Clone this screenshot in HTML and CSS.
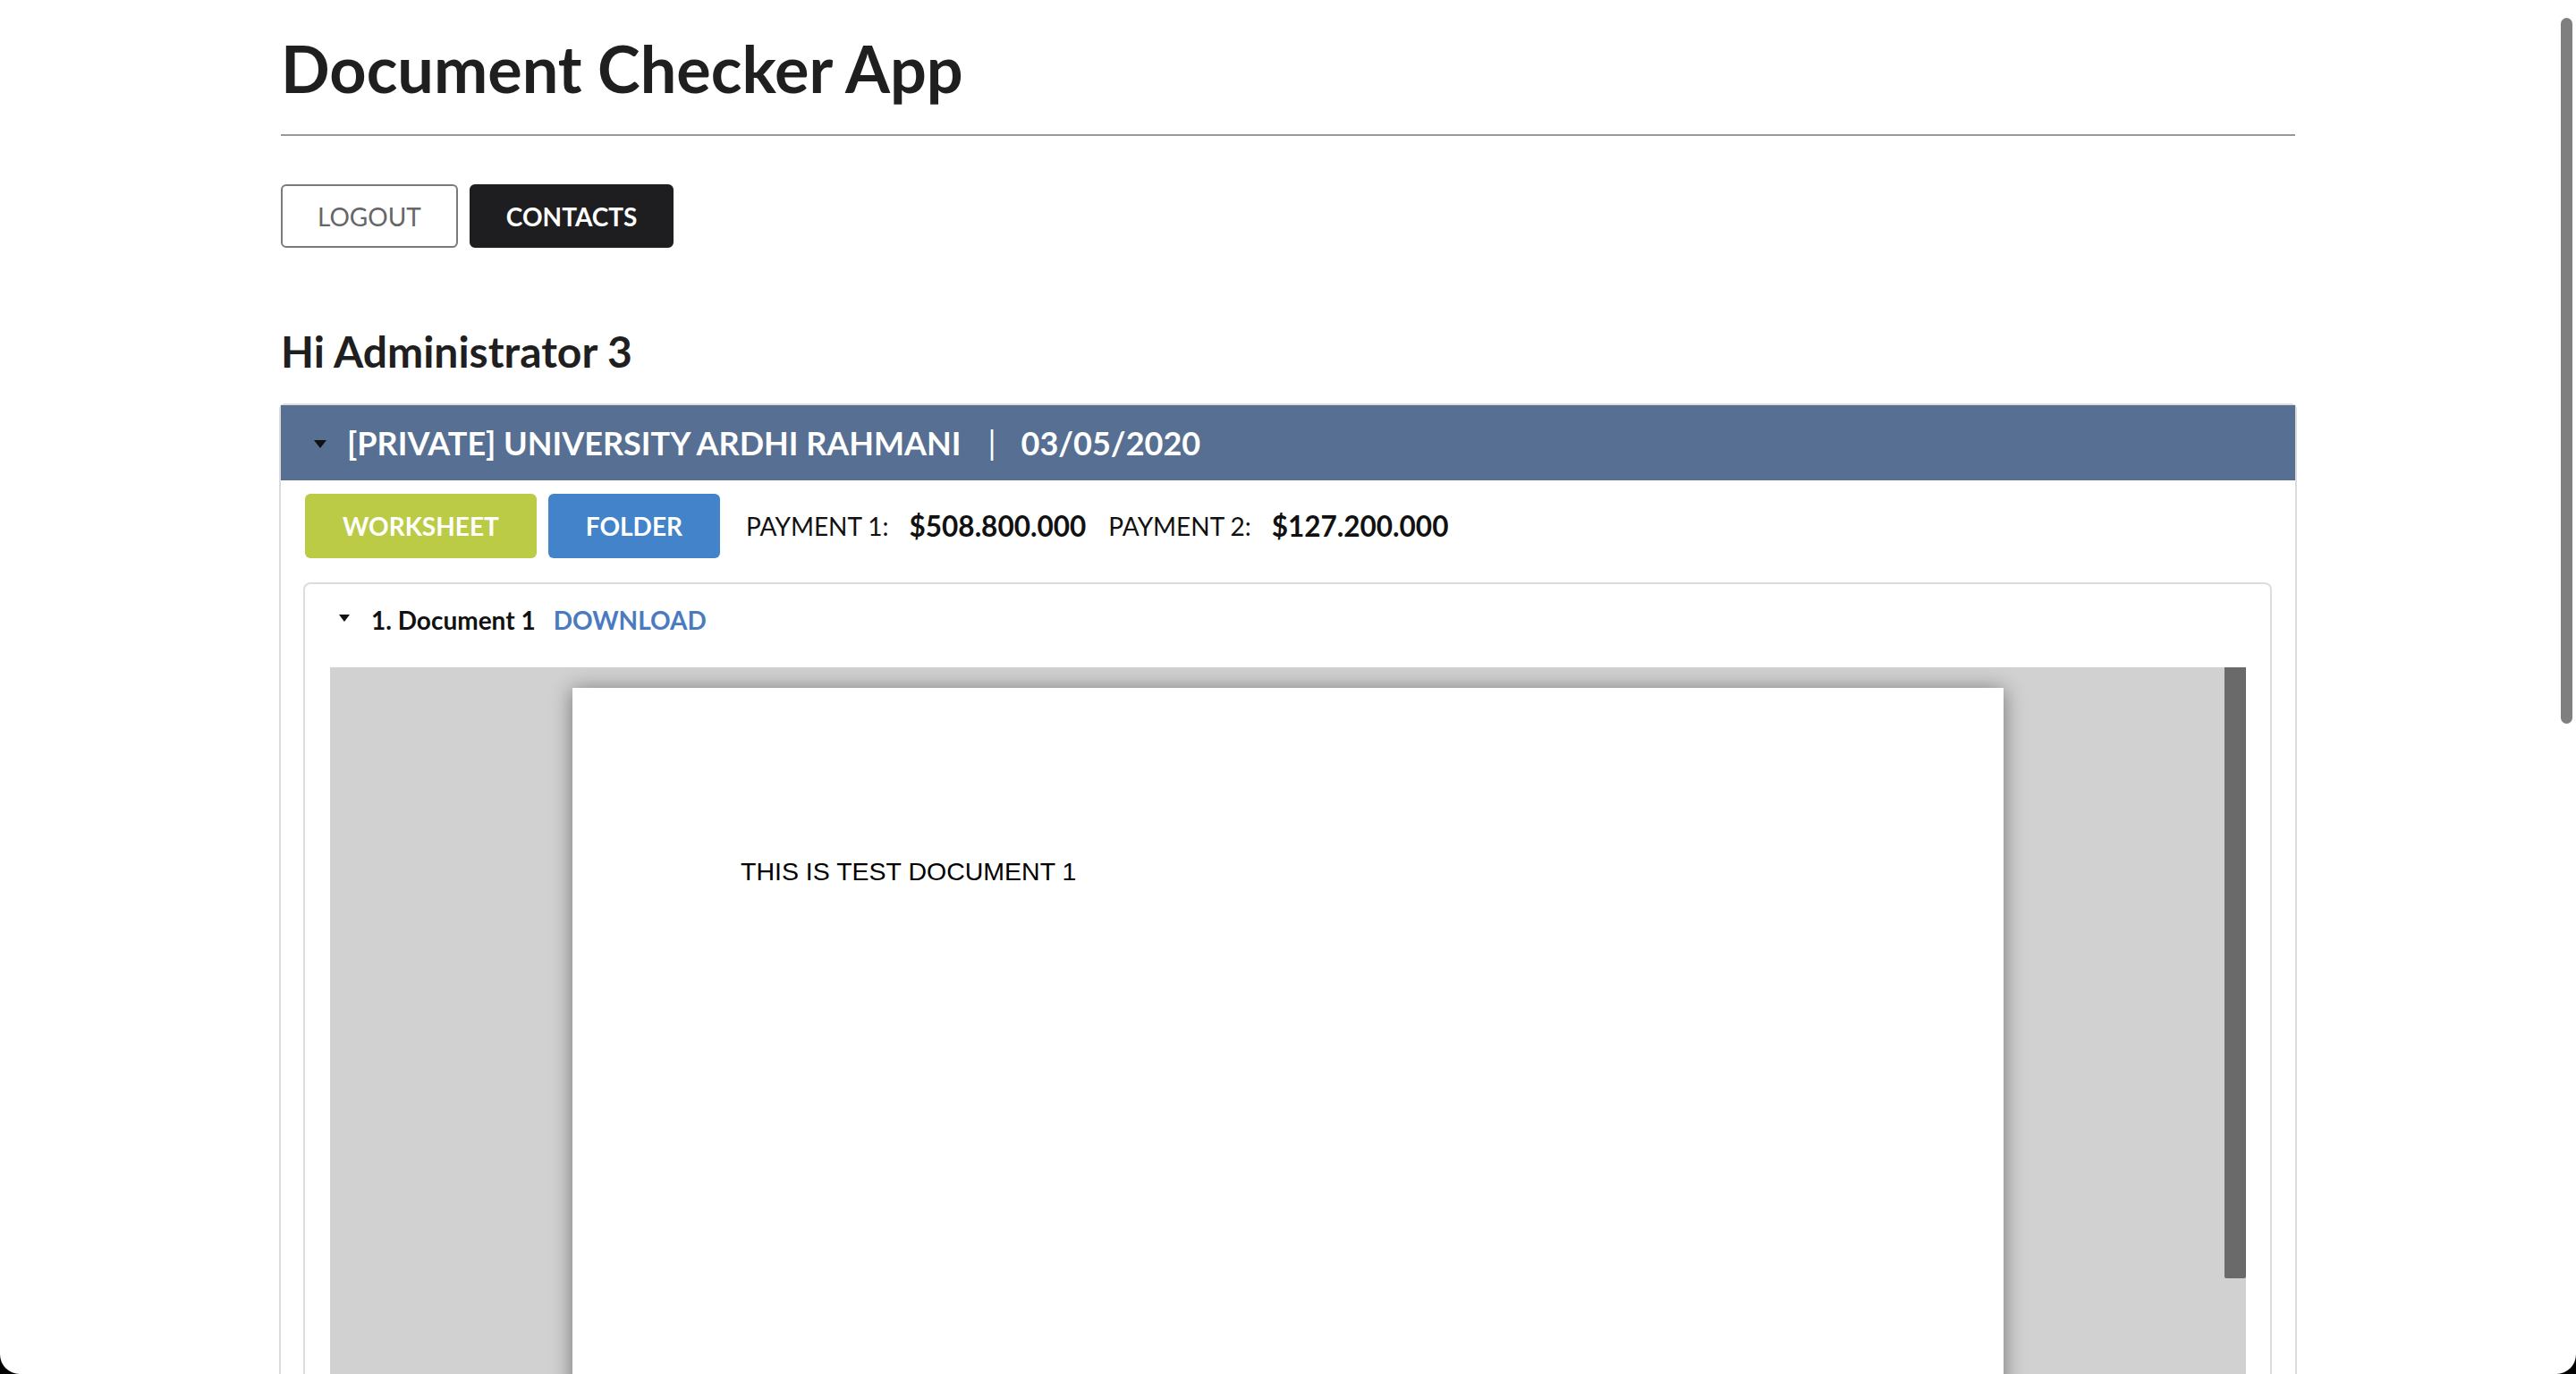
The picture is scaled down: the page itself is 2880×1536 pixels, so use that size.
FILE: index.html
```html
<!DOCTYPE html>
<html lang="en">
<head>
<meta charset="utf-8">
<title>Document Checker App</title>
<link rel="stylesheet" href="styles.css">
</head>
<body>
<div class="container">
  <h1 class="title">Document Checker App</h1>
  <hr class="rule">
  <div class="nav">
    <a class="btn btn-outline">LOGOUT</a>
    <a class="btn btn-dark">CONTACTS</a>
  </div>
  <h3 class="greet">Hi Administrator 3</h3>
  <div class="panel">
    <div class="panel-head">
      <span class="caret caret-lg"></span>
      <span class="head-text">[PRIVATE] UNIVERSITY ARDHI RAHMANI</span>
      <span class="head-sep">|</span>
      <span class="head-text">03/05/2020</span>
    </div>
    <div class="panel-body">
      <div class="actions">
        <a class="btn-fill btn-lime">WORKSHEET</a>
        <a class="btn-fill btn-blue">FOLDER</a>
        <span class="pay-label">PAYMENT 1:</span>
        <span class="pay-amount">$508.800.000</span>
        <span class="pay-label pay-label-2">PAYMENT 2:</span>
        <span class="pay-amount">$127.200.000</span>
      </div>
      <div class="card">
        <div class="summary">
          <span class="caret caret-sm"></span>
          <span class="doc-name">1. Document 1</span>
          <a class="download">DOWNLOAD</a>
        </div>
        <div class="viewer">
          <div class="pdf-page">
            <p class="pdf-text">THIS IS TEST DOCUMENT 1</p>
          </div>
          <div class="viewer-scroll"></div>
        </div>
      </div>
    </div>
  </div>
</div>
<div class="window-scroll"></div>
</body>
</html>
```
FILE: styles.css
```css
html {
  background: #000;
  height: 100%;
  overflow: hidden;
}
body {
  margin: 0;
  height: 1536px;
  background: #fff;
  border-radius: 0 0 22px 22px;
  overflow: hidden;
  font-family: Lato, "Open Sans", sans-serif;
  color: #1f1f1f;
  position: relative;
}
.container {
  width: 2252px;
  margin: 0 auto;
  padding-top: 36px;
}
.title {
  margin: 0;
  font-size: 72px;
  line-height: 80px;
  font-weight: 700;
  color: #1f1f1f;
}
.rule {
  margin: 34px 0 0;
  border: 0;
  border-top: 2px solid #999;
  height: 0;
}
.nav {
  display: flex;
  gap: 13px;
  margin-top: 54px;
}
.btn {
  box-sizing: border-box;
  height: 71px;
  padding: 0 39px;
  border: 2px solid #7a7a7a;
  border-radius: 6px;
  font-size: 28px;
  display: flex;
  align-items: center;
  cursor: pointer;
}
.btn-outline {
  background: #fff;
  color: #666;
}
.btn-dark {
  background: #1e1e20;
  border-color: #1e1e20;
  color: #fff;
  font-weight: 700;
}
.greet {
  margin: 90px 0 32px;
  font-size: 48px;
  line-height: 52px;
  font-weight: 700;
  color: #1f1f1f;
}
.panel {
  margin: 0 -2px;
  border: 2px solid #dcdcdc;
  border-bottom: 0;
  border-radius: 6px 6px 0 0;
}
.panel-head {
  height: 84px;
  background: #566f92;
  display: flex;
  align-items: center;
  padding-left: 37px;
  color: #fff;
  font-size: 36px;
  font-weight: 700;
}
.caret {
  width: 0;
  height: 0;
  border-style: solid;
  border-color: #111 transparent transparent transparent;
}
.caret-lg {
  border-width: 9px 7.5px 0 7.5px;
  margin-right: 23px;
  margin-top: 2px;
}
.caret-sm {
  border-width: 8px 6.5px 0 6.5px;
  margin-right: 24px;
  margin-top: -4px;
}
.head-sep {
  margin: 0 28px 0 30px;
  font-weight: 400;
}
.panel-body {
  padding: 15px 26px 0 25px;
}
.actions {
  display: flex;
  align-items: center;
  margin-left: 2px;
  height: 72px;
}
.btn-fill {
  height: 72px;
  padding: 0 42px;
  border-radius: 6px;
  color: #fff;
  font-size: 28px;
  font-weight: 700;
  display: flex;
  align-items: center;
  cursor: pointer;
}
.btn-lime {
  background: #bccb46;
}
.btn-blue {
  background: #4283ca;
  margin-left: 13px;
}
.pay-label {
  margin-left: 29px;
  font-size: 28px;
  color: #111;
}
.pay-label-2 {
  margin-left: 25px;
}
.pay-amount {
  margin-left: 23px;
  font-size: 31.5px;
  font-weight: 700;
  color: #111;
}
.card {
  margin-top: 27px;
  border: 2px solid #dddddd;
  border-bottom: 0;
  border-radius: 8px 8px 0 0;
  padding: 20px 27px 0 28px;
}
.summary {
  height: 40px;
  display: flex;
  align-items: center;
  padding-left: 10px;
}
.doc-name {
  font-size: 28px;
  font-weight: 700;
  color: #111;
}
.download {
  margin-left: 20px;
  font-size: 28px;
  font-weight: 700;
  color: #4b7bbf;
  cursor: pointer;
}
.viewer {
  position: relative;
  margin-top: 33px;
  height: 900px;
  padding-top: 23px;
  background: #d1d1d1;
  overflow: hidden;
}
.pdf-page {
  box-sizing: border-box;
  width: 1600px;
  height: 1200px;
  margin: 0 auto;
  padding: 188px 0 0 188px;
  background: #fff;
  box-shadow: 0 2px 22px rgba(0, 0, 0, 0.45);
}
.pdf-text {
  margin: 0;
  font-family: "Liberation Sans", Arial, sans-serif;
  font-size: 28.5px;
  line-height: 34px;
  color: #000;
}
.viewer-scroll {
  position: absolute;
  top: 0;
  right: 0;
  width: 24px;
  height: 683px;
  background: #6a6a6a;
  border-radius: 0 0 2px 2px;
}
.window-scroll {
  position: absolute;
  top: 20px;
  right: 4px;
  width: 13px;
  height: 789px;
  border-radius: 7px;
  background: #7f7f7f;
}
```
